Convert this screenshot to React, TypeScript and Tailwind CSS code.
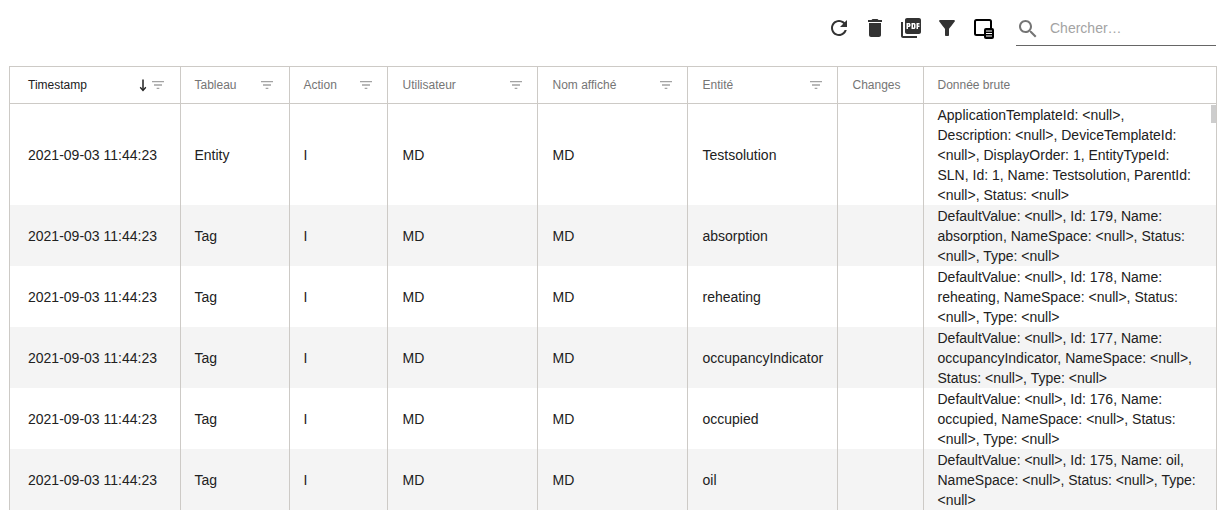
import React from 'react';

const Icon = ({ d, className }: { d: string; className?: string }) => (
  <svg viewBox="0 0 24 24" fill="currentColor" className={className}>
    <path d={d} />
  </svg>
);

const ICONS = {
  refresh:
    'M17.65 6.35C16.2 4.9 14.21 4 12 4c-4.42 0-7.99 3.58-7.99 8s3.57 8 7.99 8c3.73 0 6.84-2.55 7.73-6h-2.08c-.82 2.33-3.04 4-5.65 4-3.31 0-6-2.69-6-6s2.69-6 6-6c1.66 0 3.14.69 4.22 1.78L13 11h7V4l-2.35 2.35z',
  trash: 'M6 19c0 1.1.9 2 2 2h8c1.1 0 2-.9 2-2V7H6v12zM19 4h-3.5l-1-1h-5l-1 1H5v2h14V4z',
  pdf: 'M20 2H8c-1.1 0-2 .9-2 2v12c0 1.1.9 2 2 2h12c1.1 0 2-.9 2-2V4c0-1.1-.9-2-2-2zm-8.5 7.5c0 .83-.67 1.5-1.5 1.5H9v2H7.5V7H10c.83 0 1.5.67 1.5 1.5v1zm5 2c0 .83-.67 1.5-1.5 1.5h-2.5V7H15c.83 0 1.5.67 1.5 1.5v3zm4-3H19v1h1.5V11H19v2h-1.5V7h3v1.5zM9 9.5h1v-1H9v1zM4 6H2v14c0 1.1.9 2 2 2h14v-2H4V6zm10 5.5h1v-3h-1v3z',
  funnel:
    'M4.25 5.61C6.27 8.2 10 13 10 13v6c0 .55.45 1 1 1h2c.55 0 1-.45 1-1v-6s3.72-4.8 5.74-7.39c.51-.66.04-1.61-.79-1.61H5.04c-.83 0-1.3.95-.79 1.61z',
  filterList: 'M10 18h4v-2h-4v2zM3 6v2h18V6H3zm3 7h12v-2H6v2z',
  search:
    'M15.5 14h-.79l-.28-.27C15.41 12.59 16 11.11 16 9.5 16 5.91 13.09 3 9.5 3S3 5.91 3 9.5 5.91 16 9.5 16c1.61 0 3.09-.59 4.23-1.57l.27.28v.79l5 4.99L20.49 19l-4.99-5zm-6 0C7.01 14 5 11.99 5 9.5S7.01 5 9.5 5 14 7.01 14 9.5 11.99 14 9.5 14z',
};

const COLUMNS = [
  { label: 'Timestamp', width: 'w-[170px]', padding: 'pl-[18px] pr-[14px]', filter: true, active: true },
  { label: 'Tableau', width: 'w-[109px]', padding: 'pl-[14px] pr-[14px]', filter: true },
  { label: 'Action', width: 'w-[98px]', padding: 'pl-[14px] pr-[13px]', filter: true },
  { label: 'Utilisateur', width: 'w-[150px]', padding: 'pl-[15px] pr-[13px]', filter: true },
  { label: 'Nom affiché', width: 'w-[150px]', padding: 'pl-[15px] pr-[13px]', filter: true },
  { label: 'Entité', width: 'w-[150px]', padding: 'pl-[15px] pr-[13px]', filter: true },
  { label: 'Changes', width: 'w-[86px]', padding: 'pl-[15px] pr-[13px]' },
  { label: 'Donnée brute', width: 'w-[293px]', padding: 'pl-[14px] pr-[14px]' },
];

const ROWS = [
  {
    table: 'Entity',
    entity: 'Testsolution',
    raw: ['ApplicationTemplateId: <null>,', 'Description: <null>, DeviceTemplateId:', '<null>, DisplayOrder: 1, EntityTypeId:', 'SLN, Id: 1, Name: Testsolution, ParentId:', '<null>, Status: <null>'],
  },
  {
    table: 'Tag',
    entity: 'absorption',
    raw: ['DefaultValue: <null>, Id: 179, Name:', 'absorption, NameSpace: <null>, Status:', '<null>, Type: <null>'],
  },
  {
    table: 'Tag',
    entity: 'reheating',
    raw: ['DefaultValue: <null>, Id: 178, Name:', 'reheating, NameSpace: <null>, Status:', '<null>, Type: <null>'],
  },
  {
    table: 'Tag',
    entity: 'occupancyIndicator',
    raw: ['DefaultValue: <null>, Id: 177, Name:', 'occupancyIndicator, NameSpace: <null>,', 'Status: <null>, Type: <null>'],
  },
  {
    table: 'Tag',
    entity: 'occupied',
    raw: ['DefaultValue: <null>, Id: 176, Name:', 'occupied, NameSpace: <null>, Status:', '<null>, Type: <null>'],
  },
  {
    table: 'Tag',
    entity: 'oil',
    raw: ['DefaultValue: <null>, Id: 175, Name: oil,', 'NameSpace: <null>, Status: <null>, Type:', '<null>'],
  },
];

const cell = 'border-r border-[#cdcac6] pt-px align-middle text-[14px] leading-5 text-[#212121] font-normal';

export default function App() {
  return (
    <div className="h-[511px] w-[1226px] overflow-hidden bg-white font-['Liberation_Sans',sans-serif]">
      {/* barre d'outils */}
      <div className="flex h-[66px] items-start justify-end pr-[10px] pt-[10px]">
        <div className="flex items-center gap-3 pt-[6px] text-[#333333]">
          <Icon d={ICONS.refresh} className="h-6 w-6" />
          <Icon d={ICONS.trash} className="h-6 w-6" />
          <Icon d={ICONS.pdf} className="h-6 w-6" />
          <Icon d={ICONS.funnel} className="h-6 w-6" />
          <svg viewBox="0 0 24 24" className="ml-px h-6 w-6">
            <rect x="3" y="4" width="16" height="15" rx="1.5" fill="none" stroke="#000" strokeWidth="2" />
            <rect x="12" y="12" width="10" height="11" rx="2" fill="#000" />
            <path d="M14 15h6M14 17.5h6M14 20h6" stroke="#fff" strokeWidth="1" />
          </svg>
        </div>
        <div className="ml-5 flex h-9 w-[200px] items-center border-b border-[#666666] pt-[2px]">
          <Icon d={ICONS.search} className="h-6 w-6 text-[#757575]" />
          <span className="ml-[10px] text-[14px] text-[#a3a3a3]">Chercher…</span>
        </div>
      </div>

      {/* tableau */}
      <div className="relative ml-[9px] w-[1208px] border-l border-r border-t border-[#cdcac6]">
        <table className="w-full table-fixed border-collapse">
          <thead>
            <tr className="h-[36px] border-b border-[#cdcac6]">
              {COLUMNS.map((col, i) => (
                <th key={col.label} className={`${col.width} ${col.padding} ${i === 7 ? '' : 'border-r border-[#cdcac6]'} text-left text-[12px] font-normal`}>
                  <div className="flex items-center">
                    <span className={col.active ? 'text-[#212121]' : 'text-[#757575]'}>{col.label}</span>
                    <span className="flex-1" />
                    {col.active && (
                      <svg viewBox="0 0 14 14" className="h-[14px] w-[14px]" fill="none" stroke="#212121">
                        <path d="M7 1.5v10.5" strokeWidth="1.5" />
                        <path d="M4.2 9.2L7 12.4l2.8-3.2" strokeWidth="1.3" />
                      </svg>
                    )}
                    {col.filter && <Icon d={ICONS.filterList} className="h-4 w-4 text-[#a3a3a3]" />}
                  </div>
                </th>
              ))}
            </tr>
          </thead>
          <tbody>
            {ROWS.map((row, i) => (
              <tr key={row.entity} className={i % 2 === 1 ? 'bg-[#f4f4f4]' : 'bg-white'}>
                <td className={`${cell} px-[18px]`}>2021-09-03 11:44:23</td>
                <td className={`${cell} px-[14px]`}>{row.table}</td>
                <td className={`${cell} px-[14px]`}>I</td>
                <td className={`${cell} px-[15px]`}>MD</td>
                <td className={`${cell} px-[15px]`}>MD</td>
                <td className={`${cell} px-[15px]`}>{row.entity}</td>
                <td className={cell} />
                <td className="h-[61px] whitespace-nowrap px-[14px] pt-px align-middle text-[14px] leading-5 text-[#212121]">
                  {row.raw.map((line) => (
                    <div key={line}>{line}</div>
                  ))}
                </td>
              </tr>
            ))}
          </tbody>
        </table>
        {/* ascenseur */}
        <div className="absolute right-0 top-[38px] h-[18px] w-[5px] bg-[#cdcdcd]" />
      </div>
    </div>
  );
}
